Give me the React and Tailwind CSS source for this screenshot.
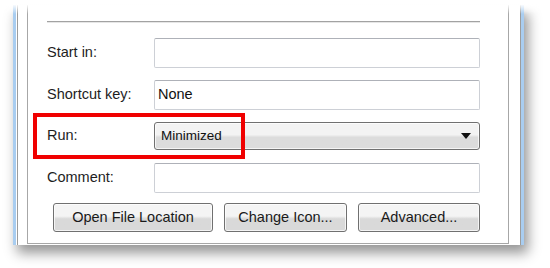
import React from 'react';

const font = { fontFamily: '"Liberation Sans", Arial, sans-serif' };

function Field({ label, value = '' }) {
  return (
    <div className="flex items-center">
      <span className="w-[107px] text-[14.5px] text-[#1e1e1e]">{label}</span>
      <div className="flex-1 h-[30px] rounded-[2px] border border-[#cdd0d6] border-t-[#aeb1b8] bg-white flex items-center pl-[3px] text-[14.5px] text-[#111]">
        {value}
      </div>
    </div>
  );
}

function Button({ children, width }) {
  return (
    <button
      className={`${width} h-[29px] rounded-[3px] border border-[#707070] bg-linear-to-b from-[#f4f4f4] from-45% to-[#d9d9d9] to-55% text-[14.5px] text-[#1a1a1a] flex items-center justify-center shadow-[inset_0_0_0_1px_rgba(255,255,255,0.7)]`}
    >
      {children}
    </button>
  );
}

export default function App() {
  return (
    <div className="w-[550px] h-[268px] bg-white relative overflow-hidden" style={font}>
      {/* window */}
      <div className="ml-[13px] mt-[5px] w-[511px] h-[240px] flex bg-white border-l-[3px] border-r-[4px] border-[#a9cdf0] shadow-[4px_8px_12px_rgba(0,0,0,0.42)]">
        <div className="flex-1 flex ml-[1px] border-l border-r border-[#9c9c9c] pl-[9px] pr-[11px] pb-[1px]">
          <div className="relative flex-1 flex flex-col border-l border-r border-b border-[#a7a7a7] pl-[19px] pr-[28px]">
            {/* separator */}
            <div className="mt-[16px] h-[2px] border-t border-[#a2a2a2] border-b border-b-[#e6e6e6]" />

            <div className="mt-[15px]">
              <Field label="Start in:" />
            </div>
            <div className="mt-[12px]">
              <Field label="Shortcut key:" value="None" />
            </div>

            {/* run dropdown */}
            <div className="mt-[12px] flex items-center">
              <span className="w-[107px] text-[14.5px] text-[#1e1e1e]">Run:</span>
              <div className="flex-1 h-[28px] rounded-[3px] border border-[#707070] bg-linear-to-b from-[#f3f3f3] from-45% to-[#dcdcdc] to-55% flex items-center justify-between pl-[6px] pr-[8px] shadow-[inset_0_0_0_1px_rgba(255,255,255,0.7)]">
                <span className="text-[13.5px] text-[#111]">Minimized</span>
                <svg width="10" height="6" viewBox="0 0 10 6">
                  <path d="M0 0 L10 0 L5 6 Z" fill="#111" />
                </svg>
              </div>
            </div>

            <div className="mt-[13px]">
              <Field label="Comment:" />
            </div>

            {/* buttons */}
            <div className="mt-[10px] ml-[6px] flex gap-[11px]">
              <Button width="w-[160px]">Open File Location</Button>
              <Button width="w-[123px]">Change Icon...</Button>
              <Button width="w-[122px]">Advanced...</Button>
            </div>

            {/* red highlight */}
            <div className="absolute left-[5px] top-[108px] w-[212px] h-[46px] border-[4px] border-[#f00000]" />
          </div>
        </div>
      </div>

      {/* top fade */}
      <div className="absolute top-0 left-0 w-full h-[14px] bg-linear-to-b from-white from-30% to-white/0" />
    </div>
  );
}
